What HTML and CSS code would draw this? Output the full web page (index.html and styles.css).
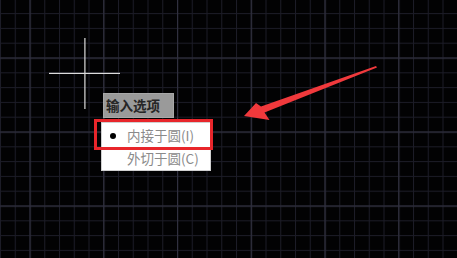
FILE: index.html
```html
<!DOCTYPE html>
<html lang="zh-CN">
<head>
    <meta charset="UTF-8">
    <meta name="viewport" content="width=device-width, initial-scale=1.0">
    <title>输入选项</title>
    <link rel="stylesheet" href="styles.css">
</head>
<body>
    <!-- Drawing area -->
    <div class="canvas">
        <svg class="canvas-art" width="457" height="258" viewBox="0 0 457 258">
            <defs>
                <pattern id="minor" patternUnits="userSpaceOnUse" x="29.5" y="57.5" width="14.75" height="14.8">
                    <rect x="0" y="0" width="1" height="14.8" fill="#1c1c27"/>
                    <rect x="0" y="0" width="14.75" height="1" fill="#1c1c27"/>
                </pattern>
                <pattern id="major" patternUnits="userSpaceOnUse" x="29.5" y="57.5" width="73.75" height="74">
                    <rect x="0" y="0" width="1.2" height="74" fill="#30303f"/>
                    <rect x="0" y="0" width="73.75" height="1.2" fill="#30303f"/>
                </pattern>
            </defs>
            <rect width="457" height="258" fill="url(#minor)"/>
            <rect width="457" height="258" fill="url(#major)"/>

            <!-- Crosshair cursor -->
            <rect x="84.3" y="38" width="1.2" height="71" fill="#dcdcdc"/>
            <rect x="49" y="72.8" width="71" height="1.2" fill="#dcdcdc"/>

            <!-- Callout arrow -->
            <polygon points="244,116 256,103 261,106.5 376,66 377,67.5 264.5,112.5 269.5,120" fill="#f0393c"/>
        </svg>

        <!-- Command prompt -->
        <div class="prompt">输入选项</div>

        <div class="option-menu">
            <div class="option-item">
                <span class="bullet"></span>
                <span>内接于圆(I)</span>
            </div>
            <div class="option-item">
                <span>外切于圆(C)</span>
            </div>
        </div>

        <div class="highlight"></div>
    </div>
</body>
</html>
```

FILE: styles.css
```css
* {
    margin: 0;
    padding: 0;
    box-sizing: border-box;
}

:root {
    --bg: #020203;
    --prompt-bg: #9a9a9a;
    --menu-text: #8a8a8a;
    --red: #e8262b;
}

body {
    background-color: var(--bg);
    font-family: 'Noto Sans CJK SC', 'Noto Sans', sans-serif;
    overflow: hidden;
}

.canvas {
    position: relative;
    width: 457px;
    height: 258px;
}

.canvas-art {
    display: block;
}

/* Prompt label */
.prompt {
    position: absolute;
    left: 103px;
    top: 93px;
    width: 71px;
    height: 25px;
    background-color: var(--prompt-bg);
    border: 1px solid #a8a8a8;
    color: #262626;
    font-size: 13.5px;
    font-weight: bold;
    line-height: 23px;
    padding-left: 2px;
}

/* Options menu */
.option-menu {
    position: absolute;
    left: 101px;
    top: 122px;
    width: 110px;
    display: flex;
    flex-direction: column;
    background-color: #fff;
    border: 1px solid #d0d0d0;
}

.option-item {
    position: relative;
    height: 23.5px;
    display: flex;
    align-items: center;
    padding-left: 25px;
    color: var(--menu-text);
    font-size: 13.5px;
}

.bullet {
    position: absolute;
    left: 8px;
    top: 10px;
    width: 6px;
    height: 6px;
    border-radius: 50%;
    background-color: #000;
}

.highlight {
    position: absolute;
    left: 94px;
    top: 119px;
    width: 119px;
    height: 31px;
    border: 3px solid var(--red);
}
```
